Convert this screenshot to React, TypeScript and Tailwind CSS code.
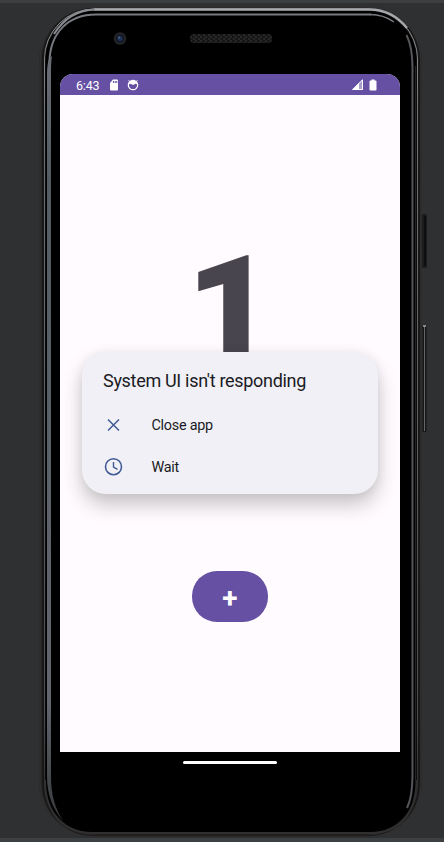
function PhoneFrame() {
  return (
    <svg className="absolute inset-0" width="444" height="842" viewBox="0 0 444 842" fill="none">
      <defs>
        <linearGradient id="rim" x1="0" y1="0" x2="0" y2="842" gradientUnits="userSpaceOnUse">
          <stop offset="0" stopColor="#a5a7aa" />
          <stop offset=".06" stopColor="#85878a" />
          <stop offset=".13" stopColor="#707275" />
          <stop offset=".85" stopColor="#4a4b4d" />
          <stop offset=".95" stopColor="#282828" />
          <stop offset="1" stopColor="#282828" />
        </linearGradient>
        <linearGradient id="left" x1="0" y1="14" x2="0" y2="822" gradientUnits="userSpaceOnUse">
          <stop offset="0" stopColor="#72757a" />
          <stop offset=".2" stopColor="#535b63" />
          <stop offset=".85" stopColor="#62666d" />
          <stop offset="1" stopColor="#35373a" />
        </linearGradient>
        <pattern id="mesh" width="5" height="4" patternUnits="userSpaceOnUse">
          <rect width="5" height="4" fill="#161616" />
          <path d="M0 1h2M3 3h2" stroke="#3a3a3a" />
        </pattern>
      </defs>
      <path d="M0 1.5h444" stroke="#3d3e40" strokeWidth="3" />
      <path d="M0 840h444" stroke="#3c4043" strokeWidth="4" />
      <rect x="421" y="214" width="6" height="54" rx="1.5" fill="#1c1c1d" />
      <path d="M425 216v50" stroke="#0b0b0b" strokeWidth="1.5" />
      <rect x="422.500" y="325" width="4" height="107" rx="1" fill="#171717" />
      <path d="M424.500 326v105" stroke="#65676a" />
      <path d="M423 326h3" stroke="#aaa" strokeWidth="1.500" />
      <rect x="39" y="6.500" width="383" height="831" rx="56" fill="#282727" />
      <rect x="40" y="7" width="381" height="830" rx="54" stroke="#343131" />
      <rect x="42" y="8" width="378" height="828" rx="52" fill="#181818" />
      <rect x="44.500" y="9" width="373" height="826" rx="50" stroke="url(#rim)" />
      <rect x="45.500" y="11" width="371" height="822" rx="49" fill="#000" />
      <path d="M45 780C45 812 62 833 92 833H370C401 833 416.500 812 416.500 780" stroke="#303030" strokeWidth="2" />
      <path d="M415.500 66V780" stroke="#242424" strokeWidth="1" />
      <path d="M371 14.500H96C68 14.500 50 33 49.500 62" stroke="#777a80" strokeWidth="2" />
      <path d="M48.500 60C47.500 64 47 69 47 74V776C47 795 53 810 63.500 821C55 809 51 795 51 776V74C51 67 51 62 52 56Z" fill="url(#left)" />
      <path d="M370 14.500C380 14.500 387 17 394 22" stroke="#777a80" strokeWidth="1.500" />
      <path d="M406.500 35C411 44 412.500 54 412.500 68V775C412.500 791 411 800 407 808" stroke="#54565a" strokeWidth="2" />
      <path d="M94 9.500H370C385 9.500 397 16 407 28" stroke="#a5a8ac" strokeWidth="2.500" />
      <path d="M95 9.500C76 10 63 20 54 34" stroke="#898c90" strokeWidth="2" />
      <circle cx="120" cy="38.500" r="6.300" fill="#242426" />
      <circle cx="120" cy="38.500" r="4" fill="#121725" />
      <circle cx="120" cy="38.500" r="2.500" fill="#203258" />
      <circle cx="119" cy="37.500" r="1" fill="#52688f" />
      <rect x="190" y="34" width="82" height="9" rx="4" fill="url(#mesh)" />
    </svg>
  );
}

function StatusBar() {
  return (
    <div className="flex h-[21px] items-center bg-[#6650a4] pl-4 pr-[23px] text-white">
      <span className="w-[33px] pt-px text-[12.500px] leading-[21px] tracking-[-0.2px]">6:43</span>
      <svg className="mt-px" width="10" height="12" viewBox="0 0 10 12">
        <path fill="currentColor" fillRule="evenodd" d="M4 .5h4q1 0 1 1v9q0 1-1 1H2q-1 0-1-1V4zM4 2v2h1V2zm1.700 0v2h1V2zm1.600 0v2h1V2z" />
      </svg>
      <svg className="ml-[8px]" width="12" height="12" viewBox="0 0 12 12" fill="none">
        <circle cx="6" cy="6" r="4.700" stroke="currentColor" strokeWidth="1.200" />
        <path d="M1.500 5.500C2 3 3.500 1.700 6 1.700S10 3 10.500 5.500L8.500 4.700 6 6 3.500 4.700z" fill="currentColor" />
        <path d="M1.500 1.500l2 1.500M10.500 1.500l-2 1.500" stroke="currentColor" />
      </svg>
      <div className="grow" />
      <svg width="11" height="11" viewBox="0 0 11 11">
        <path fill="currentColor" fillOpacity=".45" d="M11 0v11H0z" />
        <path fill="currentColor" d="M7 4v7H0z" />
        <path d="M.8 10.500h9.700V.8z" fill="none" stroke="currentColor" />
      </svg>
      <svg className="ml-[6px]" width="8" height="12" viewBox="0 0 8 12">
        <path fill="currentColor" d="M2.500.5h3v1h1q1 0 1 1v8q0 1-1 1h-5q-1 0-1-1v-8q0-1 1-1h1z" />
      </svg>
    </div>
  );
}

function Dialog() {
  return (
    <div className="absolute left-[22px] top-[278px] h-[142px] w-[296px] rounded-[24px] bg-[#f0f0f6] px-[21px] pt-[17px] text-[#1b1b1f] shadow-[0_11px_20px_rgba(0,0,0,0.22),0_0_12px_rgba(0,0,0,0.05)]">
      <h1 className="whitespace-nowrap text-[18px] leading-6 tracking-[-0.31px]">System UI isn't responding</h1>
      <button className="mt-[22px] flex h-5 items-center text-[14.400px] tracking-[-0.25px]">
        <svg width="21" height="20" viewBox="0 0 21 20" fill="none" stroke="#405a94" strokeWidth="1.500">
          <path d="M5 4.500l11 11M16 4.500l-11 11" />
        </svg>
        <span className="ml-[27.500px] pt-px">Close app</span>
      </button>
      <button className="mt-[22px] flex h-5 items-center text-[14.400px] tracking-[-0.25px]">
        <svg width="21" height="20" viewBox="0 0 21 20" fill="none" stroke="#405a94" strokeWidth="1.600">
          <circle cx="10.500" cy="9.700" r="8" />
          <path d="M10.500 5v5l4 2.300" strokeWidth="1.400" />
        </svg>
        <span className="ml-[27.500px] pt-px">Wait</span>
      </button>
    </div>
  );
}

export default function App() {
  return (
    <div className="relative h-[842px] w-[444px] overflow-hidden bg-[#2e3032] pl-[60px] pt-[74px] font-[Roboto,sans-serif]">
      <PhoneFrame />
      <main className="relative flex h-[678px] w-[340px] flex-col overflow-hidden rounded-t-[13px] bg-[#fffbfe]">
        <StatusBar />
        <div className="mt-[143px] flex h-[150px] justify-center pl-px text-[154px] font-black leading-[150px] text-[#49454f]">1</div>
        <button className="mx-auto mt-[183px] flex h-[51px] w-[76px] items-center justify-center rounded-[25px] bg-[#6650a4] pt-[4px] text-[28px] font-bold leading-none text-white">+</button>
        <Dialog />
      </main>
      <div className="relative ml-[123px] mt-[9px] h-[3px] w-[94px] rounded-full bg-white" />
    </div>
  );
}
